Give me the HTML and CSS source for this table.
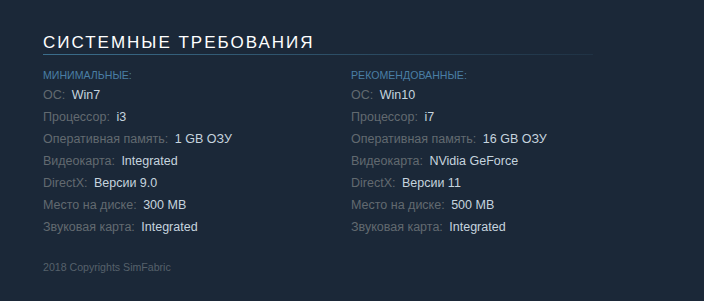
FILE: index.html
```html
<!DOCTYPE html>
<html lang="ru">
<head>
    <meta charset="UTF-8">
    <meta name="viewport" content="width=device-width, initial-scale=1.0">
    <title>Системные требования</title>
    <link rel="stylesheet" href="styles.css">
</head>
<body>
    <div class="container">
        <h2 class="title">Системные требования</h2>

        <div class="sysreq">
            <ul class="reqs">
                <li class="reqs-head">Минимальные:</li>
                <li><span class="label">ОС:</span> <span class="value">Win7</span></li>
                <li><span class="label">Процессор:</span> <span class="value">i3</span></li>
                <li><span class="label">Оперативная память:</span> <span class="value">1 GB ОЗУ</span></li>
                <li><span class="label">Видеокарта:</span> <span class="value">Integrated</span></li>
                <li><span class="label">DirectX:</span> <span class="value">Версии 9.0</span></li>
                <li><span class="label">Место на диске:</span> <span class="value">300 MB</span></li>
                <li><span class="label">Звуковая карта:</span> <span class="value">Integrated</span></li>
            </ul>
            <ul class="reqs">
                <li class="reqs-head">Рекомендованные:</li>
                <li><span class="label">ОС:</span> <span class="value">Win10</span></li>
                <li><span class="label">Процессор:</span> <span class="value">i7</span></li>
                <li><span class="label">Оперативная память:</span> <span class="value">16 GB ОЗУ</span></li>
                <li><span class="label">Видеокарта:</span> <span class="value">NVidia GeForce</span></li>
                <li><span class="label">DirectX:</span> <span class="value">Версии 11</span></li>
                <li><span class="label">Место на диске:</span> <span class="value">500 MB</span></li>
                <li><span class="label">Звуковая карта:</span> <span class="value">Integrated</span></li>
            </ul>
        </div>

        <footer class="footer">2018 Copyrights SimFabric</footer>
    </div>
</body>
</html>
```

FILE: styles.css
```css
body {
    font-family: "Liberation Sans", Arial, sans-serif;
    background-color: #1b2838;
    margin: 0;
    padding: 0;
}

.container {
    padding: 33px 43px 20px;
}

.title {
    margin: 0;
    padding-bottom: 3px;
    font-size: 17px;
    font-weight: normal;
    letter-spacing: 2px;
    text-transform: uppercase;
    color: #ffffff;
    line-height: 20px;
    max-width: 550px;
}

/* thin fading rule under the heading */
.title::after {
    content: "";
    display: block;
    height: 1px;
    margin-top: 1px;
    background: linear-gradient(to right, #3b6e8c 0%, rgba(59, 110, 140, 0.15) 100%);
}

.sysreq {
    display: grid;
    grid-template-columns: 308px 308px;
    margin-top: 8px;
}

.reqs {
    list-style: none;
    margin: 0;
    padding: 0;
}

.reqs li {
    font-size: 12.5px;
    line-height: 22px;
}

.reqs .reqs-head {
    font-size: 10.6px;
    line-height: 18px;
    text-transform: uppercase;
    color: #4a7fa5;
}

.label {
    color: #626a70;
    margin-right: 3px;
}

.value {
    color: #c6d4df;
}

.footer {
    margin-top: 23px;
    font-size: 10.6px;
    color: #56616b;
}
```
